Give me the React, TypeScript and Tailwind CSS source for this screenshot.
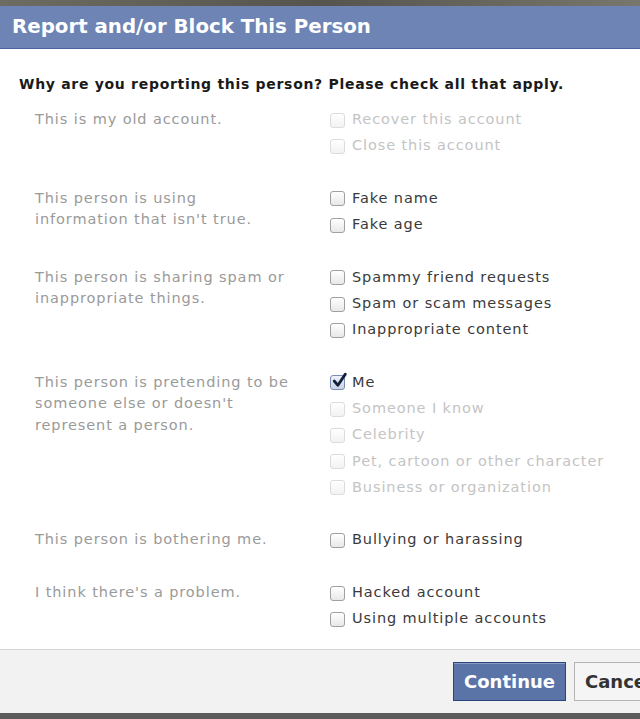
import React from "react";

type Opt = { label: string; disabled?: boolean; checked?: boolean };
type Group = { reason: string[]; options: Opt[] };

const groups: Group[] = [
  {
    reason: ["This is my old account."],
    options: [
      { label: "Recover this account", disabled: true },
      { label: "Close this account", disabled: true },
    ],
  },
  {
    reason: ["This person is using", "information that isn't true."],
    options: [{ label: "Fake name" }, { label: "Fake age" }],
  },
  {
    reason: ["This person is sharing spam or", "inappropriate things."],
    options: [
      { label: "Spammy friend requests" },
      { label: "Spam or scam messages" },
      { label: "Inappropriate content" },
    ],
  },
  {
    reason: ["This person is pretending to be", "someone else or doesn't", "represent a person."],
    options: [
      { label: "Me", checked: true },
      { label: "Someone I know", disabled: true },
      { label: "Celebrity", disabled: true },
      { label: "Pet, cartoon or other character", disabled: true },
      { label: "Business or organization", disabled: true },
    ],
  },
  {
    reason: ["This person is bothering me."],
    options: [{ label: "Bullying or harassing" }],
  },
  {
    reason: ["I think there's a problem."],
    options: [{ label: "Hacked account" }, { label: "Using multiple accounts" }],
  },
];

function Checkbox({ disabled, checked }: { disabled?: boolean; checked?: boolean }) {
  return (
    <span
      className={
        "relative inline-block h-[15px] w-[15px] shrink-0 rounded-[3px] border bg-gradient-to-b " +
        (checked
          ? "border-[#7b8db5] from-[#eef1f8] to-[#c9d2e6]"
          : disabled
          ? "border-[#dcdcdc] from-white to-[#f2f2f2]"
          : "border-[#a0a0a0] from-white to-[#e8e8e8]")
      }
    >
      {checked && (
        <svg viewBox="0 0 16 16" className="absolute -top-[4px] left-[0px] h-[17px] w-[17px]">
          <path
            d="M3 8.5 L6.5 12.5 L13.5 2"
            fill="none"
            stroke="#14203a"
            strokeWidth="2.6"
            strokeLinecap="round"
            strokeLinejoin="round"
          />
        </svg>
      )}
    </span>
  );
}

export default function App() {
  return (
    <div
      className="flex h-[719px] w-[640px] flex-col overflow-hidden bg-white"
      style={{ fontFamily: '"DejaVu Sans", Verdana, sans-serif' }}
    >
      {/* background photo peeking above the dialog */}
      <div className="h-[6px] bg-gradient-to-r from-[#6c6c62] via-[#55554e] to-[#77776d]" />

      {/* title bar */}
      <div className="flex h-[43px] items-center border-b border-[#4b64a0] bg-[#6d84b4] px-[12px] text-[19.8px] font-bold text-white">
        Report and/or Block This Person
      </div>

      {/* body */}
      <div className="flex-1 pt-[25px]">
        <div className="pl-[19px] text-[14px] font-bold leading-[20px] tracking-[0.7px] text-[#1a1a1a]">
          Why are you reporting this person? Please check all that apply.
        </div>

        <div className="mt-[13px] flex flex-col gap-[26.5px] pl-[35px]">
          {groups.map((g, i) => (
            <div key={i} className="grid grid-cols-[295px_1fr]">
              <div className="pt-[2px] text-[14.5px] leading-[21.5px] tracking-[0.9px] text-[#9a9a9a]">
                {g.reason.map((line) => (
                  <div key={line}>{line}</div>
                ))}
              </div>
              <div className="flex flex-col">
                {g.options.map((o) => (
                  <label
                    key={o.label}
                    className={
                      "flex h-[26.2px] items-center gap-[7px] text-[14.5px] tracking-[0.9px] " +
                      (o.disabled ? "text-[#c4c4c4]" : "text-[#3a3a3a]")
                    }
                  >
                    <Checkbox disabled={o.disabled} checked={o.checked} />
                    <span>{o.label}</span>
                  </label>
                ))}
              </div>
            </div>
          ))}
        </div>
      </div>

      {/* footer */}
      <div className="flex h-[64px] items-center justify-end border-t border-[#d4d4d4] bg-[#f2f2f2] pb-[1px]">
        <div className="-mr-[16px] flex items-center gap-[8px]">
          <button className="h-[39px] w-[113px] border border-[#29447e] bg-[#5b74a8] text-[18px] font-bold text-white shadow-[inset_0_1px_0_#8a9cc2]">
            Continue
          </button>
          <button className="h-[39px] w-[82px] border border-[#b5b5b5] bg-[#f5f5f5] pl-[10px] text-left text-[18px] font-bold text-[#333]">
            Cancel
          </button>
        </div>
      </div>
      <div className="h-[6px] bg-[#5c5c5c]" />
    </div>
  );
}
